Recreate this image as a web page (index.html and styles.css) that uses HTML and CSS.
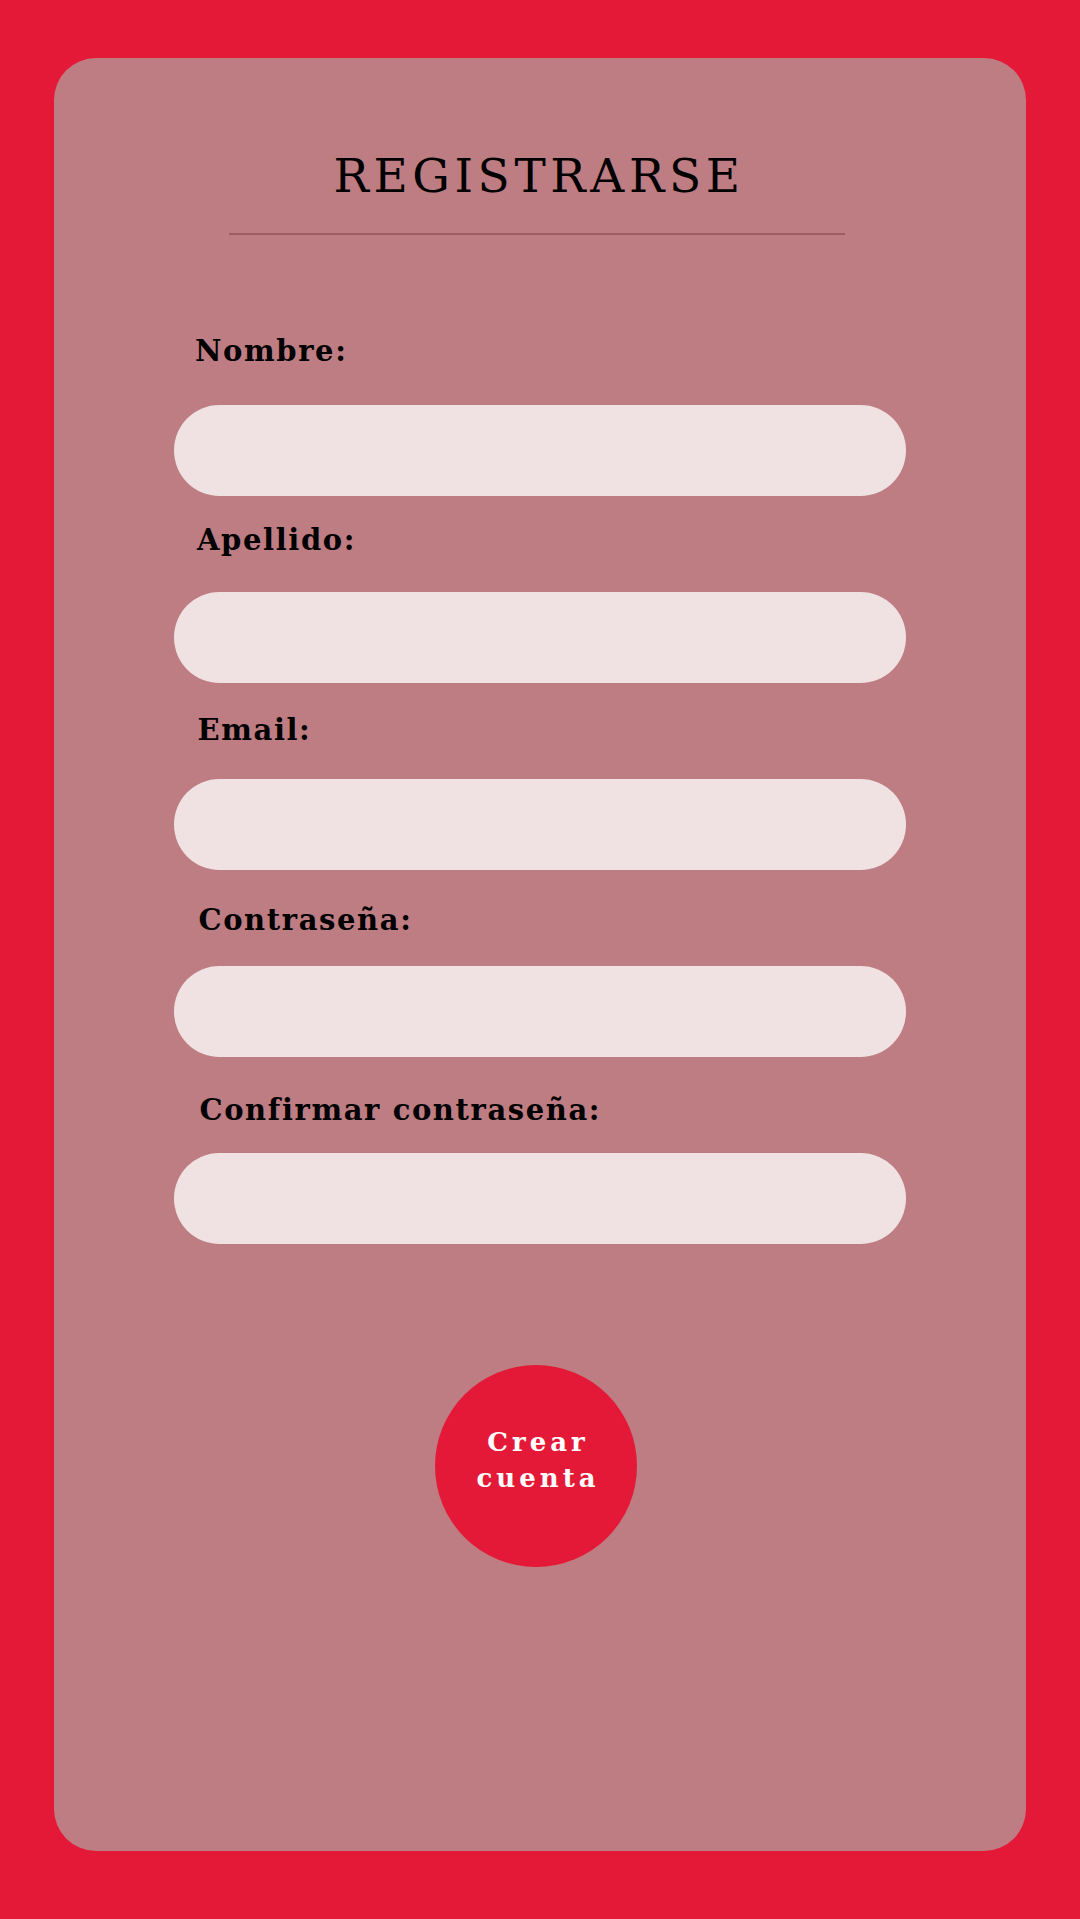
FILE: index.html
```html
<!DOCTYPE html>
<html lang="es">
<head>
<meta charset="utf-8">
<title>Registrarse</title>
<link rel="stylesheet" href="styles.css">
</head>
<body>
<main class="card">
  <header class="header">
    <h1 class="title">REGISTRARSE</h1>
    <div class="rule"></div>
  </header>
  <form class="form">
    <div class="field">
      <label class="label" for="nombre">Nombre:</label>
      <input class="input" id="nombre" type="text">
    </div>
    <div class="field">
      <label class="label" for="apellido">Apellido:</label>
      <input class="input" id="apellido" type="text">
    </div>
    <div class="field">
      <label class="label" for="email">Email:</label>
      <input class="input" id="email" type="email">
    </div>
    <div class="field">
      <label class="label" for="pass">Contraseña:</label>
      <input class="input" id="pass" type="password">
    </div>
    <div class="field">
      <label class="label" for="pass2">Confirmar contraseña:</label>
      <input class="input" id="pass2" type="password">
    </div>
    <button class="submit" type="button">Crear<br>cuenta</button>
  </form>
</main>
</body>
</html>
```
FILE: styles.css
```css
html, body {
  margin: 0;
  padding: 0;
}
body {
  background: #e41937;
  width: 1080px;
  height: 1919px;
  overflow: hidden;
  font-family: "DejaVu Serif", "Liberation Serif", serif;
}
.card {
  box-sizing: border-box;
  margin: 58px 54px 0 54px;
  height: 1793px;
  background: #be7d83;
  border-radius: 42px;
  display: flex;
  flex-direction: column;
}
.header {
  width: 616px;
  margin-left: 175px;
  padding-top: 94px;
  display: flex;
  flex-direction: column;
  align-items: center;
}
.title {
  margin: 0;
  font-size: 47px;
  line-height: 47px;
  font-weight: 400;
  letter-spacing: 4.6px;
  padding-left: 4px;
  color: #000;
}
.rule {
  margin-top: 34px;
  width: 616px;
  height: 2px;
  background: #9b5c63;
}
.form {
  display: flex;
  flex-direction: column;
  padding-left: 120px;
  padding-top: 98px;
}
.field {
  display: flex;
  flex-direction: column;
}
.label {
  font-size: 29px;
  line-height: 36px;
  font-weight: 700;
  letter-spacing: 1.6px;
  color: #000;
  padding-left: 21px;
  margin-bottom: 36px;
}
.input {
  box-sizing: border-box;
  width: 732px;
  height: 91px;
  border: none;
  border-radius: 46px;
  background: #f0e2e3;
  outline: none;
  margin: 0;
  padding: 0 40px;
}
.field:nth-child(2) { margin-top: 26px; }
.field:nth-child(3) { margin-top: 29px; }
.field:nth-child(4) { margin-top: 32px; }
.field:nth-child(5) { margin-top: 35px; }
.field:nth-child(2) .label { margin-bottom: 34px; padding-left: 23px; }
.field:nth-child(3) .label { margin-bottom: 31px; padding-left: 23.5px; }
.field:nth-child(4) .label { margin-bottom: 28px; padding-left: 24.5px; }
.field:nth-child(5) .label { margin-bottom: 25px; padding-left: 25.5px; }
.submit {
  margin-top: 121px;
  margin-left: 261px;
  width: 202px;
  height: 202px;
  border-radius: 50%;
  border: none;
  background: #e41937;
  color: #fff;
  font-family: "DejaVu Serif", "Liberation Serif", serif;
  font-size: 26px;
  line-height: 36px;
  font-weight: 700;
  letter-spacing: 4px;
  padding: 0 0 12px 4px;
  text-align: center;
}
```
